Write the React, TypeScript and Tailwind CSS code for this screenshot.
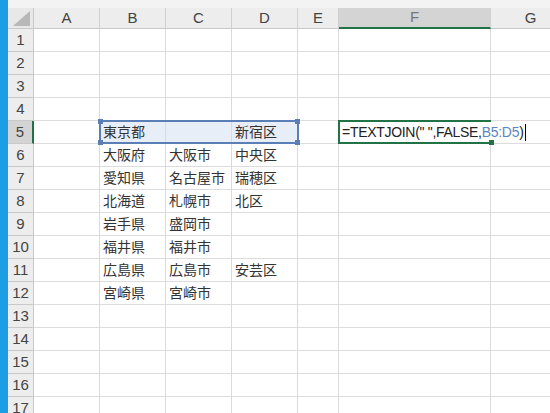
import React from 'react';

const cols = [
  { label: 'A', w: 'w-[66px]' },
  { label: 'B', w: 'w-[66px]' },
  { label: 'C', w: 'w-[66px]' },
  { label: 'D', w: 'w-[66px]' },
  { label: 'E', w: 'w-[41px]' },
  { label: 'F', w: 'w-[152px]' },
  { label: 'G', w: 'w-[80px]' },
];

const data: Record<number, string[]> = {
  5: ['東京都', '', '新宿区'],
  6: ['大阪府', '大阪市', '中央区'],
  7: ['愛知県', '名古屋市', '瑞穂区'],
  8: ['北海道', '札幌市', '北区'],
  9: ['岩手県', '盛岡市', ''],
  10: ['福井県', '福井市', ''],
  11: ['広島県', '広島市', '安芸区'],
  12: ['宮崎県', '宮崎市', ''],
};

const rows = Array.from({ length: 17 }, (_, i) => i + 1);

const Handle = ({ pos }: { pos: string }) => (
  <div className={`absolute w-[5px] h-[5px] bg-[#5a7fb6] ${pos}`} />
);

const App: React.FC = () => {
  return (
    <div className="flex w-[550px] h-[413px] overflow-hidden bg-white font-['Liberation_Sans',sans-serif]">
      <div className="w-[8px] shrink-0 bg-[#1d9de4]" />
      <div className="flex-1 flex flex-col overflow-hidden">
        <div className="h-[8px] shrink-0 bg-[#f3f3f3]" />

        {/* column headers */}
        <div className="flex h-[21px] shrink-0">
          <div className="w-[26px] shrink-0 bg-[#e8e8e8] border-r border-b border-[#c9c9c9] relative">
            <svg className="absolute right-[3px] bottom-[2px]" width="17" height="15" viewBox="0 0 17 15">
              <polygon points="17,0 17,15 0,15" fill="#b8b8b8" />
            </svg>
          </div>
          {cols.map(c => (
            <div
              key={c.label}
              className={`${c.w} shrink-0 flex items-center justify-center text-[15px] text-[#444] border-r border-[#d0d0d0] ${
                c.label === 'F'
                  ? 'bg-[#d4d4d4] border-b-2 border-b-[#217346] text-[#777]'
                  : 'bg-[#ededed] border-b border-b-[#c9c9c9]'
              }`}
            >
              {c.label}
            </div>
          ))}
        </div>

        {rows.map(r => (
          <div key={r} className="flex h-[23px] shrink-0 relative">
            <div
              className={`w-[26px] shrink-0 flex items-center justify-center text-[15px] text-[#444] border-b border-[#c9c9c9] ${
                r === 5 ? 'bg-[#d4d4d4] border-r-2 border-r-[#217346]' : 'bg-[#ededed] border-r border-r-[#c9c9c9]'
              }`}
            >
              {r}
            </div>
            {cols.map((c, ci) => {
              const text = ci >= 1 && ci <= 3 ? data[r]?.[ci - 1] ?? '' : '';
              const inRange = r === 5 && ci >= 1 && ci <= 3;
              return (
                <div
                  key={c.label}
                  className={`${c.w} shrink-0 relative flex items-end pb-[1px] pl-[3px] border-r border-[#dadada] border-b border-b-[#dcdcdc] text-[14px] text-[#333] whitespace-nowrap font-['Noto_Sans_CJK_JP',sans-serif] ${
                    inRange ? 'bg-[#e8eef8]' : ''
                  }`}
                >
                  {text}
                  {r === 5 && c.label === 'F' && (
                    <div className="absolute -left-[1px] -top-[1px] w-[153px] h-[24px] border-2 border-r-0 border-[#217346] bg-white flex items-center pl-[2px] text-[14px] tracking-[-0.3px] whitespace-nowrap text-[#222] font-['Liberation_Sans',sans-serif] z-10">
                      <span>=TEXTJOIN(" ",FALSE,</span>
                      <span className="text-[#5b86c0]">B5:D5</span>
                      <span>)</span>
                      <span className="ml-[1px] w-[1px] h-[17px] shrink-0 bg-black" />
                      <div className="absolute -right-[3px] -bottom-[3px] w-[5px] h-[5px] bg-[#217346]" />
                    </div>
                  )}
                </div>
              );
            })}
            {r === 5 && (
              <div className="absolute left-[91px] top-[-1px] w-[200px] h-[24px] border-2 border-[#5a7fb6] pointer-events-none z-10">
                <Handle pos="-left-[3px] -top-[3px]" />
                <Handle pos="-right-[3px] -top-[3px]" />
                <Handle pos="-left-[3px] -bottom-[3px]" />
                <Handle pos="-right-[3px] -bottom-[3px]" />
              </div>
            )}
          </div>
        ))}
      </div>
    </div>
  );
};

export default App;
